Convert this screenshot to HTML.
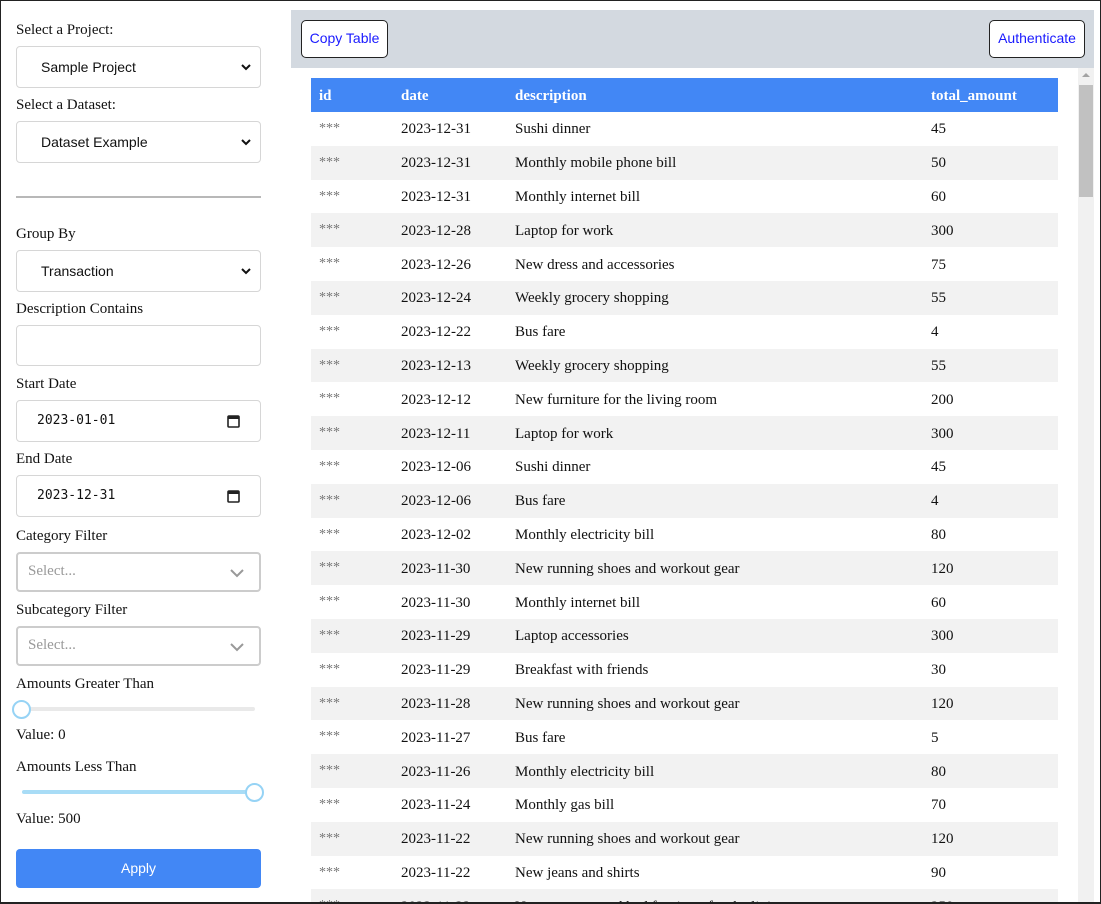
<!DOCTYPE html>
<html><head><meta charset="utf-8"><style>
*{box-sizing:border-box;margin:0;padding:0}
body{width:1101px;height:904px;overflow:hidden;background:#fff;position:relative;font-family:"Liberation Serif",serif;color:#111}
.frame{position:absolute;left:0;top:0;width:1101px;height:904px;border:1px solid #222;border-bottom-width:2px;pointer-events:none;z-index:10}
.a{position:absolute}
.lbl{position:absolute;left:16px;font-size:15px;line-height:20px}
.box{position:absolute;left:16px;width:245px;border:1px solid #d6d6d6;border-radius:4px;background:#fff}
.sel{height:42px;font-family:"Liberation Sans",sans-serif;font-size:14px;line-height:40px;padding-left:24px}
.chev{position:absolute;right:9px;top:16px}
.rs{height:40px;border:2px solid #ccc}
.rs span{position:absolute;left:10px;top:9px;font-size:15px;color:#999}
.date{height:42px;font-family:"DejaVu Sans Mono","Liberation Mono",monospace;font-size:13px;line-height:40px;padding-left:20px}
.btn{position:absolute;top:20px;height:38px;border:1.5px solid #222;border-radius:5px;background:#fff;color:#1a1aff;font-family:"Liberation Sans",sans-serif;font-size:14px;line-height:35px;text-align:center}
.clip{position:absolute;left:311px;top:78px;width:747px;height:824px;overflow:hidden}
table{width:747px;border-collapse:collapse;font-size:15px}
th{background:#4287f5;color:#fff;text-align:left;font-weight:bold;height:34px;padding:2px 0 0 8px}
td{height:33.8px;padding:2px 0 0 8px}
tr:nth-child(odd) td{background:#f2f2f2}
td:first-child{color:#777;font-size:14px;vertical-align:top;padding-top:9px}
</style></head><body>
<div class="frame"></div>
<div class="lbl" style="top:20px">Select a Project:</div>
<div class="box sel" style="top:46px">Sample Project<svg class="chev" width="10" height="8" viewBox="0 0 10 8"><path d="M1 2l4 4 4-4" stroke="#111" stroke-width="2" fill="none"/></svg></div>
<div class="lbl" style="top:95px">Select a Dataset:</div>
<div class="box sel" style="top:121px">Dataset Example<svg class="chev" width="10" height="8" viewBox="0 0 10 8"><path d="M1 2l4 4 4-4" stroke="#111" stroke-width="2" fill="none"/></svg></div>
<div class="a" style="left:16px;top:196px;width:245px;height:2px;background:#b8b8b8"></div>
<div class="lbl" style="top:224px">Group By</div>
<div class="box sel" style="top:250px">Transaction<svg class="chev" width="10" height="8" viewBox="0 0 10 8"><path d="M1 2l4 4 4-4" stroke="#111" stroke-width="2" fill="none"/></svg></div>
<div class="lbl" style="top:299px">Description Contains</div>
<div class="box" style="top:325px;height:41px"></div>
<div class="lbl" style="top:374px">Start Date</div>
<div class="box date" style="top:400px">2023-01-01<svg class="a" style="right:20px;top:13px" width="13" height="14" viewBox="0 0 13 14"><rect x="1" y="2" width="11" height="11" rx="1" stroke="#222" stroke-width="1.6" fill="none"/><rect x="1" y="2" width="11" height="3" fill="#222"/></svg></div>
<div class="lbl" style="top:449px">End Date</div>
<div class="box date" style="top:475px">2023-12-31<svg class="a" style="right:20px;top:13px" width="13" height="14" viewBox="0 0 13 14"><rect x="1" y="2" width="11" height="11" rx="1" stroke="#222" stroke-width="1.6" fill="none"/><rect x="1" y="2" width="11" height="3" fill="#222"/></svg></div>
<div class="lbl" style="top:526px">Category Filter</div>
<div class="box rs" style="top:552px"><span>Select...</span><svg class="a" style="right:14px;top:14px" width="16" height="10" viewBox="0 0 16 10"><path d="M2 2l6 6 6-6" stroke="#999" stroke-width="2" fill="none"/></svg></div>
<div class="lbl" style="top:600px">Subcategory Filter</div>
<div class="box rs" style="top:626px"><span>Select...</span><svg class="a" style="right:14px;top:14px" width="16" height="10" viewBox="0 0 16 10"><path d="M2 2l6 6 6-6" stroke="#999" stroke-width="2" fill="none"/></svg></div>
<div class="lbl" style="top:674px">Amounts Greater Than</div>
<div class="a" style="left:22px;top:707px;width:233px;height:4px;background:#e9e9e9;border-radius:2px"></div>
<div class="a" style="left:12px;top:700px;width:19px;height:19px;border:2px solid #96d3f5;border-radius:50%;background:#fff"></div>
<div class="lbl" style="top:725px">Value: 0</div>
<div class="lbl" style="top:757px">Amounts Less Than</div>
<div class="a" style="left:22px;top:790px;width:233px;height:4px;background:#a8dcf6;border-radius:2px"></div>
<div class="a" style="left:245px;top:783px;width:19px;height:19px;border:2px solid #96d3f5;border-radius:50%;background:#fff"></div>
<div class="lbl" style="top:809px">Value: 500</div>
<div class="a" style="left:16px;top:849px;width:245px;height:39px;background:#4287f5;border-radius:4px;color:#fff;font-family:'Liberation Sans',sans-serif;font-size:14px;line-height:39px;text-align:center">Apply</div>

<div class="a" style="left:291px;top:10px;width:803px;height:58px;background:#d3d9e0"></div>
<div class="btn" style="left:301px;width:87px">Copy Table</div>
<div class="btn" style="left:989px;width:96px">Authenticate</div>
<div class="a" style="left:1078px;top:68px;width:16px;height:834px;background:#f1f1f1"></div>
<div class="a" style="left:1079px;top:85px;width:14px;height:112px;background:#c1c1c1"></div>
<div class="a" style="left:1082px;top:73px;width:0;height:0;border-left:4px solid transparent;border-right:4px solid transparent;border-bottom:4px solid #a3a3a3"></div>

<div class="clip"><table>
<tr><th style="width:82px">id</th><th style="width:114px">date</th><th style="width:416px">description</th><th>total_amount</th></tr>
<tr><td>***</td><td>2023-12-31</td><td>Sushi dinner</td><td>45</td></tr>
<tr><td>***</td><td>2023-12-31</td><td>Monthly mobile phone bill</td><td>50</td></tr>
<tr><td>***</td><td>2023-12-31</td><td>Monthly internet bill</td><td>60</td></tr>
<tr><td>***</td><td>2023-12-28</td><td>Laptop for work</td><td>300</td></tr>
<tr><td>***</td><td>2023-12-26</td><td>New dress and accessories</td><td>75</td></tr>
<tr><td>***</td><td>2023-12-24</td><td>Weekly grocery shopping</td><td>55</td></tr>
<tr><td>***</td><td>2023-12-22</td><td>Bus fare</td><td>4</td></tr>
<tr><td>***</td><td>2023-12-13</td><td>Weekly grocery shopping</td><td>55</td></tr>
<tr><td>***</td><td>2023-12-12</td><td>New furniture for the living room</td><td>200</td></tr>
<tr><td>***</td><td>2023-12-11</td><td>Laptop for work</td><td>300</td></tr>
<tr><td>***</td><td>2023-12-06</td><td>Sushi dinner</td><td>45</td></tr>
<tr><td>***</td><td>2023-12-06</td><td>Bus fare</td><td>4</td></tr>
<tr><td>***</td><td>2023-12-02</td><td>Monthly electricity bill</td><td>80</td></tr>
<tr><td>***</td><td>2023-11-30</td><td>New running shoes and workout gear</td><td>120</td></tr>
<tr><td>***</td><td>2023-11-30</td><td>Monthly internet bill</td><td>60</td></tr>
<tr><td>***</td><td>2023-11-29</td><td>Laptop accessories</td><td>300</td></tr>
<tr><td>***</td><td>2023-11-29</td><td>Breakfast with friends</td><td>30</td></tr>
<tr><td>***</td><td>2023-11-28</td><td>New running shoes and workout gear</td><td>120</td></tr>
<tr><td>***</td><td>2023-11-27</td><td>Bus fare</td><td>5</td></tr>
<tr><td>***</td><td>2023-11-26</td><td>Monthly electricity bill</td><td>80</td></tr>
<tr><td>***</td><td>2023-11-24</td><td>Monthly gas bill</td><td>70</td></tr>
<tr><td>***</td><td>2023-11-22</td><td>New running shoes and workout gear</td><td>120</td></tr>
<tr><td>***</td><td>2023-11-22</td><td>New jeans and shirts</td><td>90</td></tr>
<tr><td>***</td><td>2023-11-22</td><td>New mattress and bed furniture for the living room</td><td>250</td></tr>
</table></div>
</body></html>
